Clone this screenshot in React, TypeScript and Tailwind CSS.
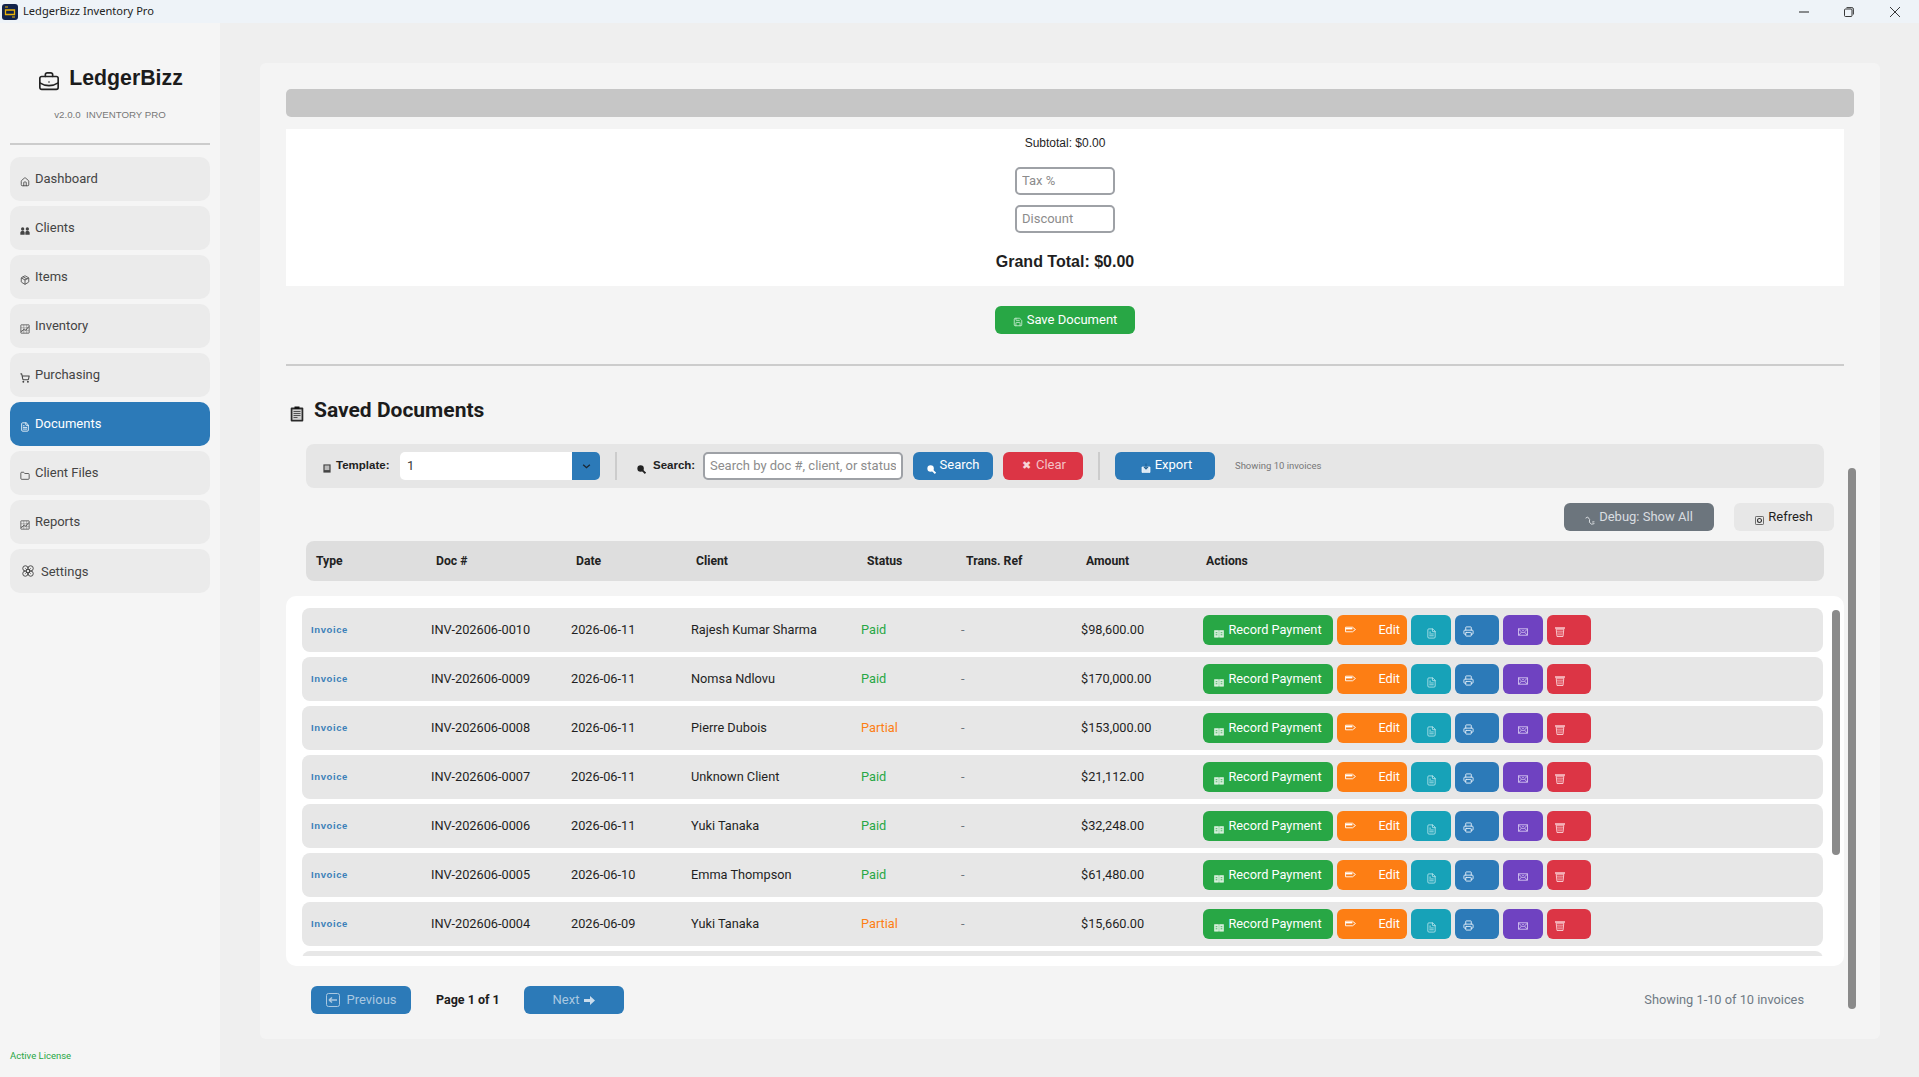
import React from "react";
import { House, Package, ShoppingCart, FileText, Folder, Flower, BriefcaseBusiness, Printer, Save } from "lucide-react";

const ChartBox = ({ c = "" }: { c?: string }) => (
  <svg viewBox="0 0 12 12" className={c} fill="none" stroke="currentColor" strokeWidth="0.9">
    <rect x="1" y="1" width="10" height="10" rx="0.5" />
    <path d="M1 4.5h10M1 8h10M4.5 1v10M8 1v10" strokeWidth="0.4" />
    <path d="M1.5 9.5L5 6l2 1.5L10.5 3" strokeWidth="1" />
  </svg>
);
const UsersFill = ({ c = "" }: { c?: string }) => (
  <svg viewBox="0 0 12 10" className={c} fill="currentColor">
    <circle cx="3.2" cy="2.6" r="2" />
    <circle cx="8.8" cy="2.6" r="2" />
    <path d="M0.4 9.5V7.2c0-1.4 1-2.2 2.8-2.2s2.4 0.8 2.4 2.2v2.3zM6.4 9.5V7.2c0-1.4 0.6-2.2 2.4-2.2s2.8 0.8 2.8 2.2v2.3z" />
  </svg>
);
const BookIcon = () => (
  <svg viewBox="0 0 12 10" className="w-[10px] h-[9px] translate-y-[9px] shrink-0">
    <path d="M0.5 1.5h5v8h-5zM6.5 1.5h5v8h-5z" fill="#d4eed9" stroke="#f2fbf4" strokeWidth="0.6" />
    <path d="M2 4h2M8 4h2M2 6.5h2M8 6.5h2" stroke="#28a745" strokeWidth="0.9" />
  </svg>
);
const PencilIcon = () => (
  <svg viewBox="0 0 12 7" className="w-[11px] h-[7px] shrink-0">
    <path d="M0.6 1h7.6L11.4 3.5 8.2 6H0.6z" fill="none" stroke="#fff" strokeWidth="1" />
    <path d="M0.6 2.6h7.5" stroke="#fff" strokeWidth="1.6" />
  </svg>
);
const MailBox = () => (
  <svg viewBox="0 0 11 8" className="w-[10px] h-[8px] translate-y-[2px]" fill="none" stroke="#dccff3" strokeWidth="0.9">
    <rect x="0.5" y="0.5" width="10" height="7" />
    <path d="M0.5 0.8L4 4 0.8 7.4M10.5 0.8L7 4l3.2 3.4" />
    <path d="M4.5 2.5h2M4.5 4.5h2" strokeWidth="0.8" />
  </svg>
);
const TrashBox = () => (
  <svg viewBox="0 0 10 10" className="w-[10px] h-[10px] translate-y-[2px]" fill="none" stroke="#fbd5d9">
    <path d="M0 1h10" strokeWidth="1.4" />
    <path d="M1.2 2.2l0.8 7.3h6l0.8-7.3z" strokeWidth="0.9" />
    <path d="M2 4.2h6M2.3 6h5.4M2.5 7.8h5" strokeWidth="0.7" />
  </svg>
);
const SearchFill = ({ color }: { color: string }) => (
  <svg viewBox="0 0 10 10" className="w-[9px] h-[9px] translate-y-[3px] shrink-0">
    <circle cx="4" cy="4" r="3.6" fill={color} />
    <path d="M6 6l3.4 3.2" stroke={color} strokeWidth="2" />
  </svg>
);
const ClipIcon = () => (
  <svg viewBox="0 0 14 16" className="w-[14px] h-[16px] translate-y-[3px] shrink-0">
    <rect x="0.7" y="1.5" width="12.6" height="14" rx="1" fill="#2a2a2a" />
    <rect x="2.4" y="3.4" width="9.2" height="10.4" fill="#cfcfcf" />
    <path d="M3.5 5.5h7M3.5 7.5h7M3.5 9.5h7M3.5 11.5h4" stroke="#333" strokeWidth="0.8" />
    <rect x="4.5" y="0.5" width="5" height="2.4" fill="#111" />
  </svg>
);
const MiniBook = () => (
  <svg viewBox="0 0 8 9" className="w-[8px] h-[9px] translate-y-[2px] shrink-0">
    <rect x="0.4" y="0.4" width="7.2" height="8.2" fill="#444" />
    <rect x="1.6" y="1.5" width="4.8" height="4.6" fill="#bbb" />
  </svg>
);
const ExportIcon = () => (
  <svg viewBox="0 0 10 10" className="w-[10px] h-[10px] translate-y-[2px] shrink-0">
    <path d="M1 4v5.4h8V4z" fill="#dbe9f5" stroke="#fff" strokeWidth="0.7" />
    <path d="M5 0.5v5M3 3.8L5 6l2-2.2" stroke="#1f5f93" fill="none" strokeWidth="1.1" />
  </svg>
);
const BugIcon = () => (
  <svg viewBox="0 0 10 9" className="w-[10px] h-[9px] translate-y-[3px] shrink-0" fill="none" stroke="#d9dde0" strokeWidth="1">
    <path d="M0.6 2.2L2.6 1 4.6 3.4 4.4 6.4 6.6 8.2 9.4 7.6" />
    <path d="M9.4 5.8L7.2 6" />
  </svg>
);
const RefreshBox = () => (
  <svg viewBox="0 0 10 10" className="w-[9px] h-[9px] translate-y-[3px] shrink-0" fill="none" stroke="#333">
    <rect x="0.5" y="0.5" width="9" height="9" rx="1" strokeWidth="0.8" />
    <circle cx="5" cy="5" r="2.2" strokeWidth="1.2" />
  </svg>
);

const navCls = "w-[10px] h-[10px] translate-y-[3px] shrink-0";
const nav: { name: string; icon: React.ReactNode; active?: boolean }[] = [
  { name: "Dashboard", icon: <House className={navCls} strokeWidth={2} /> },
  { name: "Clients", icon: <UsersFill c={navCls} /> },
  { name: "Items", icon: <Package className={navCls} strokeWidth={2} /> },
  { name: "Inventory", icon: <ChartBox c={navCls} /> },
  { name: "Purchasing", icon: <ShoppingCart className={navCls} strokeWidth={2.5} /> },
  { name: "Documents", icon: <FileText className={navCls} strokeWidth={2} />, active: true },
  { name: "Client Files", icon: <Folder className={navCls} strokeWidth={2} /> },
  { name: "Reports", icon: <ChartBox c={navCls} /> },
];

const rows = [
  ["INV-202606-0010", "2026-06-11", "Rajesh Kumar Sharma", "Paid", "$98,600.00"],
  ["INV-202606-0009", "2026-06-11", "Nomsa Ndlovu", "Paid", "$170,000.00"],
  ["INV-202606-0008", "2026-06-11", "Pierre Dubois", "Partial", "$153,000.00"],
  ["INV-202606-0007", "2026-06-11", "Unknown Client", "Paid", "$21,112.00"],
  ["INV-202606-0006", "2026-06-11", "Yuki Tanaka", "Paid", "$32,248.00"],
  ["INV-202606-0005", "2026-06-10", "Emma Thompson", "Paid", "$61,480.00"],
  ["INV-202606-0004", "2026-06-09", "Yuki Tanaka", "Partial", "$15,660.00"],
];

const Row = ({ r }: { r: string[] }) => (
  <div className="flex items-center h-[44px] rounded-[8px] bg-[#e7e7e7] pl-[9px] text-[12.75px] text-[#1f1f1f] shrink-0">
    <div className="w-[120px] text-[9.5px] font-bold tracking-[0.6px] text-[#3b7fb8] font-['Liberation_Sans',sans-serif]">Invoice</div>
    <div className="w-[140px]">{r[0]}</div>
    <div className="w-[120px]">{r[1]}</div>
    <div className="w-[170px]">{r[2]}</div>
    <div className={r[3] === "Paid" ? "w-[100px] text-[#28a745]" : "w-[100px] text-[#fd7e14]"}>{r[3]}</div>
    <div className="w-[120px] text-[#6c757d]">-</div>
    <div className="w-[122px]">{r[4]}</div>
    <div className="flex gap-[4px] text-white">
      <div className="w-[130px] h-[30px] rounded-[6px] bg-[#28a745] flex justify-center gap-[4px] pt-[5px]"><BookIcon /><span>Record Payment</span></div>
      <div className="w-[70px] h-[30px] rounded-[6px] bg-[#fd7e14] flex items-start justify-between pl-[8px] pr-[7px] pt-[5px]"><span className="mt-[6px]"><PencilIcon /></span><span>Edit</span></div>
      <div className="w-[40px] h-[30px] rounded-[6px] bg-[#17a2b8] flex items-center justify-center"><FileText className="w-[11px] h-[13px] translate-y-[3px] text-[#cfeef3]" strokeWidth={1.6} /></div>
      <div className="w-[44px] h-[30px] rounded-[6px] bg-[#2c7ab8] flex items-center pl-[8px]"><Printer className="w-[11px] h-[11px] translate-y-[1px] text-[#e3eef7]" strokeWidth={2} /></div>
      <div className="w-[40px] h-[30px] rounded-[6px] bg-[#6f42c1] flex items-center justify-center"><MailBox /></div>
      <div className="w-[44px] h-[30px] rounded-[6px] bg-[#dc3545] flex items-center pl-[8px]"><TrashBox /></div>
    </div>
  </div>
);

export default function App() {
  return (
    <div className="w-[1919px] h-[1077px] flex flex-col overflow-hidden bg-[#efefef] font-['Roboto',sans-serif] text-[#1f1f1f]">
      {/* Title bar */}
      <div className="h-[23px] bg-[#eef3f8] flex items-center shrink-0 relative">
        <svg viewBox="0 0 16 16" className="w-[16px] h-[16px] ml-[2px]">
          <rect width="16" height="16" rx="3" fill="#12234a" />
          <path d="M3.5 6h9v4.5h-9z" fill="none" stroke="#eab308" strokeWidth="1.3" />
          <path d="M3 3h3M10 13h3" stroke="#eab308" strokeWidth="1.2" />
        </svg>
        <span className="ml-[5px] text-[11.1px] text-[#222] font-['Noto_Sans',sans-serif]">LedgerBizz Inventory Pro</span>
        <div className="ml-auto flex items-center mr-[19px]">
          <svg viewBox="0 0 10 10" className="w-[10px] h-[10px]"><path d="M0 5h10" stroke="#222" strokeWidth="1" /></svg>
          <svg viewBox="0 0 10 10" className="w-[10px] h-[10px] ml-[35px]" fill="none" stroke="#222" strokeWidth="0.9"><rect x="0.5" y="2" width="7.5" height="7.5" rx="1" /><path d="M2.5 0.6h5.4a1.5 1.5 0 0 1 1.5 1.5v5.4" /></svg>
          <svg viewBox="0 0 10 10" className="w-[10px] h-[10px] ml-[36px]" stroke="#222" strokeWidth="0.9"><path d="M0 0l10 10M10 0L0 10" /></svg>
        </div>
      </div>

      <div className="flex-1 flex min-h-0">
        {/* Sidebar */}
        <aside className="w-[220px] shrink-0 bg-[#f5f5f5] px-[10px] flex flex-col">
          <div className="flex items-center justify-center gap-[9px] mt-[43px] h-[28px] pl-[1px]">
            <BriefcaseBusiness className="w-[22px] h-[22px] translate-y-[2px] text-[#222]" strokeWidth={1.8} />
            <span className="text-[21.3px] font-bold text-[#1c1c1c] font-['Liberation_Sans',sans-serif] leading-none -translate-y-[1px]">LedgerBizz</span>
          </div>
          <div className="text-center text-[9.7px] text-[#777] mt-[15px] leading-[12px] whitespace-pre font-['Liberation_Sans',sans-serif]">v2.0.0  INVENTORY PRO</div>
          <div className="h-[2px] bg-[#cccccc] mt-[22px]" />
          <nav className="flex flex-col gap-[5px] mt-[12px]">
            {nav.map((n) => (
              <div key={n.name} className={n.active ? "h-[44px] rounded-[10px] bg-[#2c7ab8] text-white flex items-center pl-[10px] gap-[5px] text-[13px]" : "h-[44px] rounded-[10px] bg-[#ebebeb] text-[#444] flex items-center pl-[10px] gap-[5px] text-[13px]"}>
                {n.icon}
                <span>{n.name}</span>
              </div>
            ))}
            <div className="h-[44px] rounded-[10px] bg-[#ebebeb] text-[#444] flex items-center pl-[11px] gap-[6px] text-[13px]">
              <Flower className="w-[14px] h-[14px]" strokeWidth={1.6} />
              <span className="translate-y-[1px]">Settings</span>
            </div>
          </nav>
          <div className="mt-auto mb-[16px] text-[9.5px] text-[#28a745] leading-[11px]">Active License</div>
        </aside>

        {/* Main */}
        <main className="flex-1 min-w-0 pt-[40px] pl-[40px] pr-[39px] pb-[38px]">
          <div className="relative h-full bg-[#f4f4f4] rounded-[6px] pt-[26px] pl-[26px] pr-[36px]">
            <div className="h-[28px] bg-[#c6c6c6] rounded-[5px] -mr-[10px]" />
            <div className="mt-[12px] h-[157px] bg-white flex flex-col items-center">
              <div className="mt-[6px] text-[12px] leading-[16px] font-['Liberation_Sans',sans-serif] text-[#1f1f1f]">Subtotal: $0.00</div>
              <input placeholder="Tax %" className="mt-[16px] w-[100px] h-[28px] border-2 border-[#9ea1a6] rounded-[5px] px-[5px] pb-[2px] text-[13px] placeholder:text-[#8c8c8c] bg-white outline-none" />
              <input placeholder="Discount" className="mt-[10px] w-[100px] h-[28px] border-2 border-[#9ea1a6] rounded-[5px] px-[5px] pb-[2px] text-[13px] placeholder:text-[#8c8c8c] bg-white outline-none" />
              <div className="mt-[18px] text-[16px] font-bold leading-[22px] font-['Liberation_Sans',sans-serif]">Grand Total: $0.00</div>
            </div>
            <div className="flex justify-center mt-[20px]">
              <div className="w-[140px] h-[28px] rounded-[6px] bg-[#28a745] text-white text-[13px] flex items-center justify-center gap-[4px]">
                <Save className="w-[10px] h-[10px] translate-y-[2px] text-[#cdeed5]" strokeWidth={2} />
                <span>Save Document</span>
              </div>
            </div>
            <div className="h-[2px] bg-[#cccccc] mt-[30px]" />
            <div className="flex items-center gap-[10px] mt-[32px] pl-[4px] h-[26px]">
              <ClipIcon />
              <span className="text-[21px] font-bold text-[#1c1c1c]">Saved Documents</span>
            </div>

            {/* Filter bar */}
            <div className="mt-[20px] ml-[20px] mr-[20px] h-[44px] bg-[#e6e6e6] rounded-[8px] flex items-center pl-[17px] text-[12px]">
              <MiniBook />
              <span className="ml-[5px] w-[64px] font-bold text-[11.5px] text-[#222] font-['Liberation_Sans',sans-serif]">Template:</span>
              <div className="w-[200px] h-[28px] rounded-[5px] bg-white flex overflow-hidden text-[13px] text-[#3a3a3a]">
                <span className="flex-1 pl-[7px] leading-[27px]">1</span>
                <span className="w-[28px] bg-[#2c7ab8] flex items-center justify-center">
                  <svg viewBox="0 0 10 6" className="w-[9px] h-[5px]"><path d="M1 1l4 3.4L9 1" fill="none" stroke="#1b2733" strokeWidth="1.7" /></svg>
                </span>
              </div>
              <span className="w-[2px] h-[28px] bg-[#cccccc] ml-[15px]" />
              <span className="ml-[20px]"><SearchFill color="#222" /></span>
              <span className="ml-[7px] w-[50px] font-bold text-[11.5px] text-[#222] font-['Liberation_Sans',sans-serif]">Search:</span>
              <input placeholder="Search by doc #, client, or status..." className="w-[200px] h-[28px] border-2 border-[#9ea1a6] rounded-[5px] px-[5px] pb-[2px] text-[13px] placeholder:text-[#8c8c8c] bg-white outline-none" />
              <div className="ml-[10px] w-[80px] h-[28px] rounded-[6px] bg-[#2c7ab8] text-white text-[13px] flex items-center justify-center gap-[4px]"><SearchFill color="#fff" /><span className="-translate-y-[1px]">Search</span></div>
              <div className="ml-[10px] w-[80px] h-[28px] rounded-[6px] bg-[#dc3545] text-[#f4c2c7] text-[13px] flex items-center justify-center gap-[5px] pl-[2px]"><span className="text-[11px] text-[#f7d5d8]">✖</span><span className="-translate-y-[1px]">Clear</span></div>
              <span className="w-[2px] h-[28px] bg-[#cccccc] ml-[15px]" />
              <div className="ml-[15px] w-[100px] h-[28px] rounded-[6px] bg-[#2c7ab8] text-white text-[13px] flex items-center justify-center gap-[4px] pl-[3px]"><ExportIcon /><span className="-translate-y-[1px]">Export</span></div>
              <span className="ml-[20px] text-[9.5px] text-[#777]">Showing 10 invoices</span>
            </div>

            {/* Debug / refresh */}
            <div className="flex justify-end gap-[20px] mt-[15px] mr-[10px]">
              <div className="w-[150px] h-[28px] rounded-[6px] bg-[#6c757d] text-[#d9dde0] text-[13px] flex items-center justify-center gap-[4px]"><BugIcon /><span>Debug: Show All</span></div>
              <div className="w-[100px] h-[28px] rounded-[6px] bg-[#e7e7e7] text-[#1f1f1f] text-[13px] flex items-center justify-center gap-[4px]"><RefreshBox /><span>Refresh</span></div>
            </div>

            {/* Table header */}
            <div className="mt-[10px] ml-[20px] mr-[20px] h-[40px] bg-[#dedede] rounded-[8px] flex items-center pl-[10px] text-[12.2px] font-bold text-[#222]">
              <div className="w-[120px]">Type</div>
              <div className="w-[140px]">Doc #</div>
              <div className="w-[120px]">Date</div>
              <div className="w-[171px]">Client</div>
              <div className="w-[99px]">Status</div>
              <div className="w-[120px]">Trans. Ref</div>
              <div className="w-[120px]">Amount</div>
              <div>Actions</div>
            </div>

            {/* List */}
            <div className="relative mt-[15px] h-[370px] bg-white rounded-[10px] pt-[12px] pl-[16px] pr-[21px]">
              <div className="h-[348px] overflow-hidden flex flex-col gap-[5px]">
                {rows.map((r) => <Row key={r[0]} r={r} />)}
                <div className="h-[44px] rounded-[8px] bg-[#e7e7e7] shrink-0" />
              </div>
              <div className="absolute right-[4px] top-[14px] w-[8px] h-[245px] rounded-[4px] bg-[#8a8a8a]" />
            </div>

            {/* Pagination */}
            <div className="mt-[20px] ml-[25px] flex items-center h-[28px] text-[13px]">
              <div className="w-[100px] h-[28px] rounded-[6px] bg-[#2c7ab8] text-[#a9c8e1] flex items-center justify-center gap-[6px] pl-[1px]">
                <svg viewBox="0 0 14 14" className="w-[14px] h-[14px]" fill="none" stroke="#a9c8e1"><rect x="0.5" y="0.5" width="13" height="13" rx="2" /><path d="M3 7h8M3 7l3-2.5M3 7l3 2.5" strokeWidth="1.6" /></svg>
                <span>Previous</span>
              </div>
              <span className="ml-[25px] w-[88px] font-bold text-[12.5px] text-[#1c1c1c]">Page 1 of 1</span>
              <div className="w-[100px] h-[28px] rounded-[6px] bg-[#2c7ab8] text-[#a9c8e1] flex items-center justify-center gap-[5px]">
                <span>Next</span>
                <svg viewBox="0 0 11 9" className="w-[11px] h-[9px]"><path d="M0 3h6V0l5 4.5L6 9V6H0z" fill="#c9dcec" /></svg>
              </div>
              <span className="ml-auto mr-[40px] text-[12.8px] text-[#6f7a85]">Showing 1-10 of 10 invoices</span>
            </div>

            <div className="absolute right-[24px] top-[405px] w-[8px] h-[541px] rounded-[4px] bg-[#8a8a8a]" />
          </div>
        </main>
      </div>
    </div>
  );
}
